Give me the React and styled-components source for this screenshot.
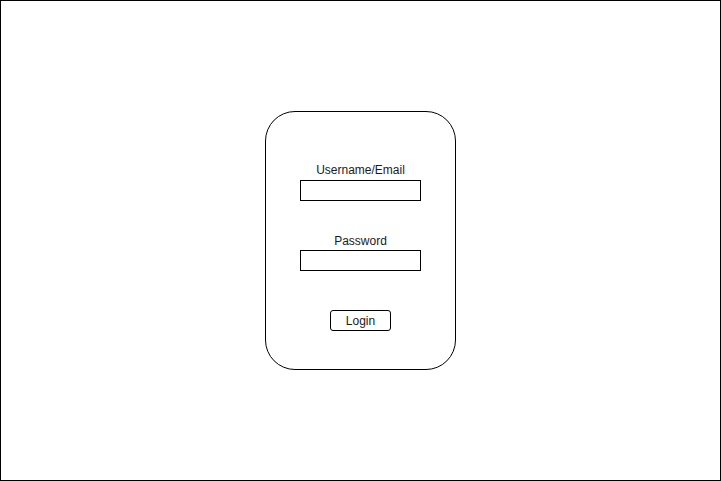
import React from 'react'
import styled, { createGlobalStyle } from 'styled-components'

const GlobalStyle = createGlobalStyle`
  html, body {
    margin: 0;
    padding: 0;
    background: #fff;
  }
  body {
    font-family: "Liberation Sans", Arial, sans-serif;
  }
`

const Frame = styled.div`
  width: 721px;
  height: 481px;
  box-sizing: border-box;
  border: 1px solid #000;
  display: flex;
  align-items: center;
  justify-content: center;
  background: #fff;
`

const Card = styled.form`
  width: 191px;
  height: 259px;
  box-sizing: border-box;
  border: 1px solid #000;
  border-radius: 30px;
  padding-top: 51px;
  display: flex;
  flex-direction: column;
  align-items: center;
`

const Field = styled.div`
  display: flex;
  flex-direction: column;
  align-items: center;
  gap: ${props => props.gap || 3}px;
  margin-bottom: ${props => props.spacing || 0}px;
`

const Label = styled.label`
  font-size: 12px;
  line-height: 14px;
  color: #1a1a1a;
`

const Input = styled.input`
  width: 121px;
  height: 21px;
  box-sizing: border-box;
  border: 1px solid #000;
  border-radius: 0;
  padding: 0 4px;
  margin: 0;
  font-family: inherit;
  font-size: 12px;
  background: #fff;
  outline: none;
`

const LoginButton = styled.button`
  width: 61px;
  height: 21px;
  box-sizing: border-box;
  border: 1px solid #000;
  border-radius: 3px;
  background: #fff;
  padding: 1px 0 0;
  font-family: inherit;
  font-size: 12px;
  line-height: 18px;
  color: #1a1a1a;
  cursor: pointer;
`

export default function App() {
  return (
    <>
      <GlobalStyle />
      <Frame>
        <Card onSubmit={e => e.preventDefault()}>
          <Field spacing={33}>
            <Label htmlFor="user">Username/Email</Label>
            <Input id="user" type="text" />
          </Field>
          <Field gap={2} spacing={39}>
            <Label htmlFor="pass">Password</Label>
            <Input id="pass" type="password" />
          </Field>
          <LoginButton type="submit">Login</LoginButton>
        </Card>
      </Frame>
    </>
  )
}
